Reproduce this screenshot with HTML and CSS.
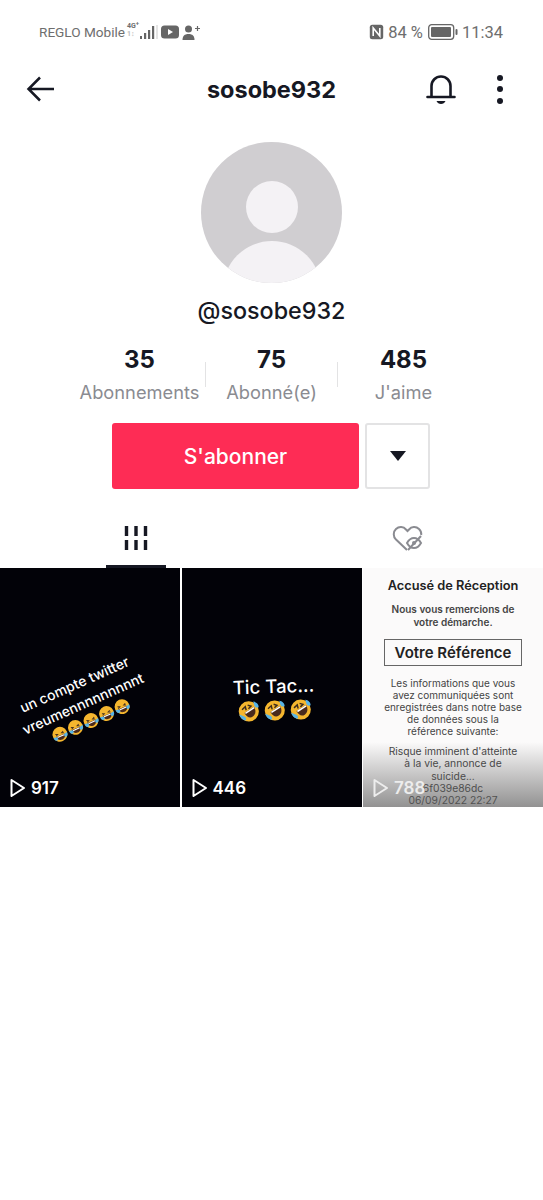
FILE: index.html
```html
<!DOCTYPE html>
<html lang="fr">
<head>
    <meta charset="UTF-8">
    <meta name="viewport" content="width=device-width, initial-scale=1.0">
    <title>sosobe932</title>
    <link rel="stylesheet" href="styles.css">
</head>
<body>
    <svg class="sprite" width="0" height="0">
        <defs>
            <symbol id="laugh" viewBox="0 0 24 24">
                <circle cx="12" cy="12" r="10.500" fill="#f5b62e"/>
                <path d="M6 9.500l3 1.400-3 1.400M18 9.500l-3 1.400 3 1.400" fill="none" stroke="#4a3320" stroke-width="1.400"/>
                <path d="M5.500 13.500h13c0 4-3 6.500-6.500 6.500s-6.500-2.500-6.500-6.500z" fill="#4a2a1c"/>
                <path d="M7 14h10v1.600H7z" fill="#fff"/>
                <path d="M1.500 13c0 3 1 5.500 3.500 5.500s2.500-2.500 1.500-4.500zM22.500 13c0 3-1 5.500-3.500 5.500s-2.500-2.500-1.500-4.500z" fill="#58b4e6"/>
            </symbol>
            <symbol id="rofl" viewBox="0 0 24 24">
                <circle cx="12" cy="12" r="10.500" fill="#f5b62e"/>
                <path d="M5 10l3.500-3 .8 3.800M11 5.500l3.500 1.200-2.800 2.500" fill="none" stroke="#3d2b1c" stroke-width="1.500"/>
                <path d="M7.500 13.500l10-6c2.500 4 1.500 8-1.500 10s-6.500 .5-8.500-4z" fill="#4a2a1c"/>
                <path d="M8 13.200l9.300-5.500.8 1.400-9.300 5.500z" fill="#fff"/>
                <path d="M17 2c3 .5 5.500 2.500 5.500 6-2 .8-4 0-4.500-2zM2 15c.5 3 3 6 6.500 6.500.8-2 0-4-2-4.500z" fill="#58b4e6"/>
            </symbol>
            <symbol id="play" viewBox="0 0 16 20">
                <path d="M1.500 2l12.500 8-12.500 8z" fill="none" stroke="currentColor" stroke-width="2" stroke-linejoin="round"/>
            </symbol>
        </defs>
    </svg>

    <div class="status-bar">
        <div class="status-left">
            <span>REGLO Mobile</span>
            <span class="net">
                <span class="net-type">4G<sup>+</sup><br><em>1↕</em></span>
                <svg width="20" height="16" viewBox="0 0 20 16"><path d="M1 12h2v3H1zM5 9h2.200v6H5zM9 6h2.200v9H9zM13 2h2.200v13H13z" fill="#666"/><path d="M17.500 1h1v14h-1z" fill="#c9c9c9"/></svg>
            </span>
            <svg class="yt" width="18" height="14" viewBox="0 0 18 14"><rect y=".5" width="18" height="13" rx="3.500" fill="#666"/><path d="M7 4l5 3-5 3z" fill="#fff"/></svg>
            <svg width="18" height="15" viewBox="0 0 18 15"><circle cx="6.500" cy="4" r="3.500" fill="#666"/><path d="M.5 15c0-4 2-6 6-6s6 2 6 6z" fill="#666"/><path d="M13 3.500h5M15.500 1v5" stroke="#666" stroke-width="1.200"/></svg>
        </div>
        <div class="status-right">
            <svg width="15" height="16" viewBox="0 0 15 16"><rect x=".8" y=".8" width="13.400" height="14.400" rx="2.500" fill="#666"/><path d="M4.200 12V4l6.600 8V4" fill="none" stroke="#fff" stroke-width="1.600"/></svg>
            <span class="pct">84 %</span>
            <svg width="30" height="16" viewBox="0 0 30 16"><rect x=".7" y=".7" width="25" height="14.600" rx="3" fill="none" stroke="#666" stroke-width="1.300"/><rect x="3" y="3" width="20" height="10" rx="1" fill="#666"/><rect x="27.500" y="5" width="2" height="6" rx="1" fill="#666"/></svg>
            <span>11:34</span>
        </div>
    </div>

    <header class="top-nav">
        <svg class="back" width="30" height="30" viewBox="0 0 30 30"><path d="M28 15H3M14 3.500L2.500 15 14 26.500" fill="none" stroke="#161823" stroke-width="2.500"/></svg>
        <h1>sosobe932</h1>
        <svg class="bell" width="30" height="32" viewBox="0 0 30 32"><path d="M1.500 24h27M5.500 24V13a9.500 9.500 0 0 1 19 0v11" fill="none" stroke="#161823" stroke-width="2.600" stroke-linecap="round"/><path d="M10.500 28h9c-.8 2-2.500 3-4.500 3s-3.700-1-4.500-3z" fill="#161823"/></svg>
        <div class="dots"><i></i><i></i><i></i></div>
    </header>

    <section class="profile">
        <div class="avatar">
            <div class="avatar-head"></div>
            <div class="avatar-body"></div>
        </div>
        <div class="handle">@sosobe932</div>
        <div class="stats">
            <div class="stat"><strong>35</strong><span>Abonnements</span></div>
            <div class="stat"><strong>75</strong><span>Abonné(e)</span></div>
            <div class="stat"><strong>485</strong><span>J'aime</span></div>
        </div>
        <div class="actions">
            <button class="follow" type="button">S'abonner</button>
            <button class="more" type="button"><span class="caret"></span></button>
        </div>
    </section>

    <nav class="tabs">
        <div class="tab active">
            <svg width="24" height="26" viewBox="0 0 24 26"><path d="M2.500 1v10M12 1v10M21.500 1v10M2.500 15v10M12 15v10M21.500 15v10" stroke="#161823" stroke-width="3.400"/></svg>
        </div>
        <div class="tab">
            <svg width="32" height="28" viewBox="0 0 32 28"><path d="M15 25L4 14.500C1 11.500 1 6.800 4 4c3-2.800 7.500-2.500 10 .5l1.500 1.500L17 4.500C19.500 1.500 24 1.200 27 4c1.800 1.700 2.500 4 2.200 6" fill="none" stroke="#8a8b91" stroke-width="2"/><path d="M15 18c2-3.500 4.500-5 7-5s5 1.500 7 5c-2 3.500-4.500 5-7 5s-5-1.500-7-5z" fill="none" stroke="#8a8b91" stroke-width="2"/><circle cx="22" cy="18" r="2" fill="#8a8b91"/><path d="M16 25L29 11" stroke="#8a8b91" stroke-width="2"/></svg>
        </div>
    </nav>

    <section class="videos">
        <article class="thumb dark">
            <div class="slanted">
                <p>un compte twitter</p>
                <p>vreumennnnnnnnnt</p>
                <div class="emojis small">
                    <svg><use href="#laugh"/></svg><svg><use href="#laugh"/></svg><svg><use href="#laugh"/></svg><svg><use href="#laugh"/></svg><svg><use href="#laugh"/></svg>
                </div>
            </div>
            <div class="views"><svg width="16" height="20"><use href="#play"/></svg>917</div>
        </article>
        <article class="thumb dark">
            <div class="tic-tac">
                <p>Tic Tac...</p>
                <div class="emojis">
                    <svg><use href="#rofl"/></svg><svg><use href="#rofl"/></svg><svg><use href="#rofl"/></svg>
                </div>
            </div>
            <div class="views"><svg width="16" height="20"><use href="#play"/></svg>446</div>
        </article>
        <article class="thumb doc">
            <h2>Accusé de Réception</h2>
            <p class="thanks">Nous vous remercions de<br>votre démarche.</p>
            <div class="ref-box">Votre Référence</div>
            <p class="info">Les informations que vous<br>avez communiquées sont<br>enregistrées dans notre base<br>de données sous la<br>référence suivante:</p>
            <p class="info risk">Risque imminent d'atteinte<br>à la vie, annonce de<br>suicide...<br>6f039e86dc<br>06/09/2022 22:27</p>
            <div class="fade"></div>
            <div class="views"><svg width="16" height="20"><use href="#play"/></svg>788</div>
        </article>
    </section>
</body>
</html>
```

FILE: styles.css
```css
* {
    box-sizing: border-box;
}
body {
    margin: 0;
    background: #fff;
    color: #161823;
    font-family: 'Inter', 'Liberation Sans', sans-serif;
}
p, h1, h2 {
    margin: 0;
}
.sprite {
    display: block;
}
.status-bar {
    height: 60px;
    padding: 22px 40px 0 39px;
    display: flex;
    justify-content: space-between;
    align-items: flex-start;
    color: #6e6e6e;
    font-family: 'Roboto', sans-serif;
}
.status-left {
    display: flex;
    align-items: center;
    gap: 3px;
    font-size: 13.600px;
    height: 20px;
}
.net {
    display: flex;
    align-items: center;
    margin-left: -1px;
    margin-right: -1px;
}
.net-type {
    font-size: 7px;
    line-height: 8px;
    font-weight: 700;
    width: 14px;
    margin-top: -4px;
}
.net-type sup {
    font-size: 6px;
    line-height: 0;
}
.net-type em {
    font-style: normal;
    color: #bbb;
}
.net svg {
    margin-left: -2px;
}
.status-right {
    display: flex;
    align-items: center;
    gap: 4px;
    font-size: 16.500px;
    height: 20px;
}
.pct {
    margin-right: 1px;
}
.top-nav {
    height: 58px;
    padding: 0 40px 0 26px;
    display: flex;
    align-items: center;
    position: relative;
}
.top-nav h1 {
    position: absolute;
    left: 0;
    right: 0;
    text-align: center;
    font-size: 23.500px;
    font-weight: 700;
}
.bell {
    margin-left: auto;
    margin-right: 41px;
}
.dots {
    display: flex;
    flex-direction: column;
    gap: 5.500px;
}
.dots i {
    width: 6px;
    height: 6px;
    border-radius: 50%;
    background: #161823;
}
.profile {
    display: flex;
    flex-direction: column;
    align-items: center;
    padding-top: 24px;
}
.avatar {
    width: 141px;
    height: 141px;
    border-radius: 50%;
    background: #d0ced1;
    overflow: hidden;
    display: flex;
    flex-direction: column;
    align-items: center;
    padding-top: 39px;
}
.avatar-head {
    width: 52px;
    height: 52px;
    flex-shrink: 0;
    border-radius: 50%;
    background: #f4f2f5;
}
.avatar-body {
    width: 98px;
    height: 98px;
    flex-shrink: 0;
    margin-top: 8px;
    border-radius: 50%;
    background: #f4f2f5;
}
.handle {
    margin-top: 14px;
    font-size: 23.300px;
    line-height: 28px;
    font-weight: 500;
}
.stats {
    margin-top: 21px;
    display: flex;
    width: 396px;
}
.stat {
    width: 132px;
    display: flex;
    flex-direction: column;
    align-items: center;
    position: relative;
}
.stat + .stat::before {
    content: "";
    position: absolute;
    left: -1px;
    top: 16px;
    height: 25px;
    width: 1px;
    background: #e3e3e4;
}
.stat strong {
    font-size: 24px;
    line-height: 28px;
    font-weight: 700;
}
.stat span {
    margin-top: 6px;
    font-size: 18.300px;
    line-height: 24px;
    color: #8a8b91;
    white-space: nowrap;
}
.actions {
    margin-top: 19px;
    margin-right: 1px;
    display: flex;
    gap: 6px;
}
.follow {
    width: 247px;
    height: 66px;
    border: none;
    border-radius: 3px;
    background: #fe2c55;
    color: #fff;
    font-family: inherit;
    font-size: 21px;
    font-weight: 500;
}
.more {
    width: 65px;
    height: 66px;
    border: 2px solid #e3e3e4;
    border-radius: 3px;
    background: #fff;
    display: flex;
    align-items: center;
    justify-content: center;
    padding: 0;
}
.caret {
    width: 0;
    height: 0;
    border-left: 8px solid transparent;
    border-right: 8px solid transparent;
    border-top: 10px solid #161823;
}
.tabs {
    display: flex;
    height: 79px;
    padding-left: 106px;
    padding-right: 105px;
    justify-content: space-between;
}
.tab {
    width: 60px;
    display: flex;
    justify-content: center;
    padding-top: 36px;
}
.tab.active {
    border-bottom: 3px solid #161823;
}
.videos {
    display: grid;
    grid-template-columns: repeat(3, 180px);
    gap: 1.500px;
}
.thumb {
    height: 239px;
    position: relative;
    overflow: hidden;
}
.thumb.dark {
    background: #020208;
    color: #fff;
}
.views {
    position: absolute;
    left: 10px;
    bottom: 9px;
    display: flex;
    align-items: center;
    gap: 5px;
    color: #fff;
    font-size: 17px;
    font-weight: 600;
}
.slanted {
    position: absolute;
    left: 12px;
    top: 104px;
    width: 140px;
    transform: rotate(-24deg);
    text-align: center;
    font-size: 14px;
    line-height: 21px;
    font-weight: 500;
    white-space: nowrap;
}
.emojis {
    display: flex;
    justify-content: center;
    gap: 3px;
}
.emojis svg {
    width: 23px;
    height: 23px;
}
.emojis.small {
    gap: 0;
}
.emojis.small svg {
    width: 17px;
    height: 17px;
}
.tic-tac {
    padding-top: 105px;
    text-align: center;
    font-size: 18.600px;
    font-weight: 500;
    line-height: 26px;
    transform: rotate(-2deg);
}
.thumb.doc {
    background: #fbfafa;
    color: #444;
    text-align: center;
    padding-top: 9px;
}
.doc h2 {
    font-size: 12.800px;
    line-height: 18px;
    font-weight: 600;
    color: #222;
}
.thanks {
    margin-top: 8px;
    font-size: 10px;
    line-height: 13px;
    font-weight: 600;
}
.ref-box {
    margin: 10px auto 0;
    width: 138px;
    height: 27px;
    border: 1px solid #666;
    line-height: 25px;
    font-size: 15px;
    font-weight: 600;
    color: #222;
}
.info {
    margin-top: 11px;
    font-size: 10px;
    line-height: 12px;
}
.risk {
    margin-top: 8px;
    font-size: 10.300px;
    line-height: 12.300px;
}
.fade {
    position: absolute;
    left: 0;
    right: 0;
    bottom: 0;
    height: 65px;
    background: linear-gradient(rgba(90, 90, 90, 0), rgba(90, 90, 90, 0.65));
}
.doc .views {
    color: #ededed;
}
```
